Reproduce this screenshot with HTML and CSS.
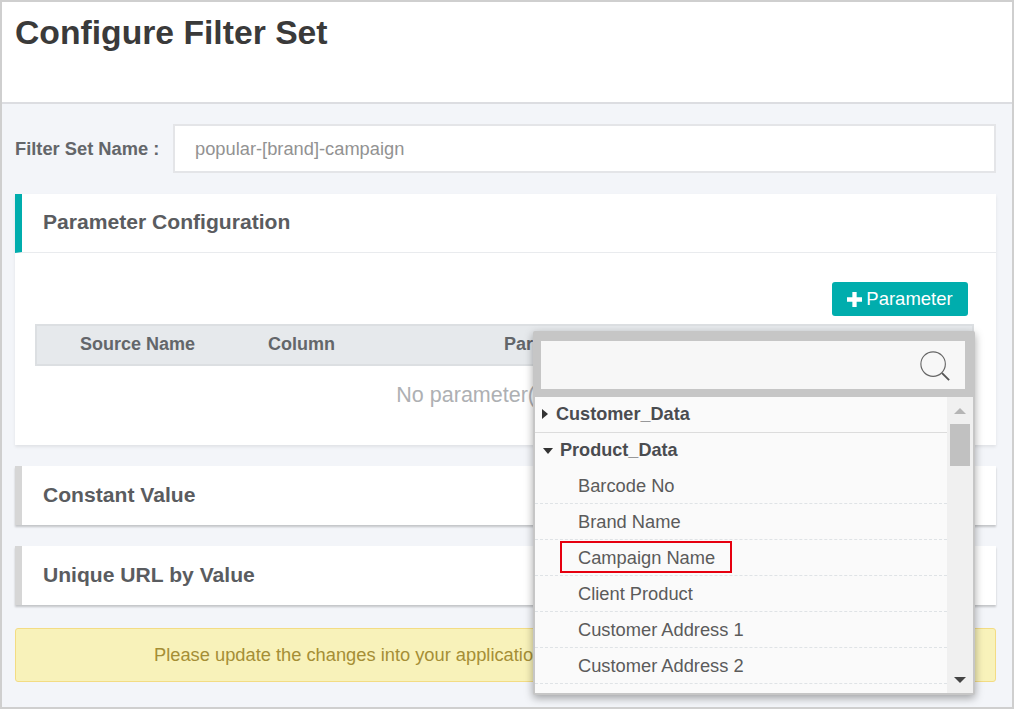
FILE: index.html
```html
<!DOCTYPE html>
<html lang="en">
<head>
<meta charset="utf-8">
<title>Configure Filter Set</title>
<link rel="stylesheet" href="styles.css">
</head>
<body>
<div class="frame">
  <header class="page-head"><h1>Configure Filter Set</h1></header>
  <main class="page-body">
    <div class="name-row">
      <label class="name-label">Filter Set Name :</label>
      <div class="name-input">popular-[brand]-campaign</div>
    </div>

    <section class="panel panel-active">
      <div class="panel-head active"><h2>Parameter Configuration</h2></div>
      <div class="panel-content">
        <div class="btn-row">
          <button class="add-btn"><svg class="plus" viewBox="0 0 14 14"><path d="M5 0h4v5h5v4H9v5H5V9H0V5h5z"/></svg>Parameter</button>
        </div>
        <div class="table-head">
          <span class="col col-source">Source Name</span>
          <span class="col col-column">Column</span>
          <span class="col col-param">Parameter</span>
        </div>
        <div class="empty">No parameter(s) found</div>
      </div>
    </section>

    <section class="panel"><div class="panel-head"><h2>Constant Value</h2></div></section>
    <section class="panel"><div class="panel-head"><h2>Unique URL by Value</h2></div></section>

    <div class="alert">Please update the changes into your application to apply the filter set</div>

    <div class="popup">
      <div class="search">
        <svg class="search-icon" viewBox="0 0 34 34"><circle cx="15" cy="15" r="13" fill="none" stroke="#666" stroke-width="1.2"/><path d="M24.5 24.5l7.5 7.5" stroke="#555" stroke-width="2" fill="none"/></svg>
      </div>
      <div class="list-wrap">
        <ul class="list">
          <li class="group group-closed"><span class="tri-right"></span>Customer_Data</li>
          <li class="group group-open"><span class="tri-down"></span>Product_Data</li>
          <li class="item">Barcode No</li>
          <li class="item">Brand Name</li>
          <li class="item item-marked"><span class="mark"></span>Campaign Name</li>
          <li class="item">Client Product</li>
          <li class="item">Customer Address 1</li>
          <li class="item">Customer Address 2</li>
          <li class="item">Customer Age</li>
        </ul>
        <div class="scrollbar">
          <span class="arrow-up"></span>
          <span class="thumb"></span>
          <span class="arrow-down"></span>
        </div>
      </div>
    </div>
  </main>
</div>
</body>
</html>
```

FILE: styles.css
```css
* { box-sizing: border-box; }
html, body { margin: 0; height: 100%; }
body { font-family: "Liberation Sans", Arial, sans-serif; background: #fff; overflow: hidden; }
.frame { width: 1014px; height: 709px; border: 2px solid #cfcfcf; display: flex; flex-direction: column; overflow: hidden; }
.page-head { height: 102px; background: #fff; border-bottom: 2px solid #dcdde1; padding: 11px 13px 0; flex: none; }
.page-head h1 { margin: 0; font-size: 33.7px; line-height: 38px; font-weight: 700; color: #3a3a3a; }
.page-body { flex: 1; background: #f3f5f9; padding: 20px 16px 0 13px; position: relative; }
.name-row { display: flex; align-items: center; height: 49px; }
.name-label { width: 158px; font-size: 18.3px; font-weight: 700; color: #63666a; white-space: nowrap; }
.name-input { flex: 1; height: 49px; border: 2px solid #e4e5e8; background: #fff; padding-left: 20px; font-size: 18.3px; line-height: 45px; color: #929292; }
.panel { background: #fff; margin-top: 21px; box-shadow: 0 2px 2px rgba(0,0,0,.2); }
.panel-active { box-shadow: 0 2px 3px rgba(0,0,0,.08); }
.panel-head { height: 59px; border-left: 7px solid #d6d6d6; padding: 0 0 2px 21px; display: flex; align-items: center; }
.panel-head.active { border-left-color: #00adad; border-bottom: 1px solid #e9ebee; }
.panel-head h2 { margin: 0; font-size: 21.1px; font-weight: 700; color: #5a5c60; }
.panel-content { height: 192px; padding: 29px 22px 0 20px; }
.btn-row { display: flex; justify-content: flex-end; padding-right: 6px; height: 34px; }
.add-btn { width: 136px; height: 34px; background: #00adad; color: #fff; border: 0; border-radius: 3px; font: 18.5px "Liberation Sans", Arial, sans-serif; padding: 0; display: flex; align-items: center; justify-content: center; gap: 4px; }
.plus { width: 15px; height: 15px; fill: #fff; }
.table-head { margin-top: 8px; height: 42px; background: #e6e9ec; border: 2px solid #dcdfe2; padding-bottom: 2px; display: flex; align-items: center; font-size: 18px; font-weight: 700; color: #63666a; }
.col { display: block; }
.col-source { margin-left: 43px; width: 188px; }
.col-column { width: 236px; }
.empty { text-align: center; font-size: 21.5px; color: #aeb0b3; margin-top: 16px; line-height: 26px; }
.alert { margin-top: 23px; height: 54px; background: #f8f2ba; border: 1px solid #f3dc84; border-radius: 3px; color: #a58e35; font-size: 18.3px; line-height: 52px; padding-left: 138px; white-space: nowrap; overflow: hidden; }
.popup { position: absolute; left: 531px; top: 227px; width: 442px; height: 364px; background: #fafafa; border: 2px solid #c6c6c6; box-shadow: 0 3px 8px rgba(0,0,0,.35); border-radius: 2px; display: flex; flex-direction: column; }
.search { height: 64px; flex: none; background: #f7f7f7; border: solid #c6c6c6; border-width: 8px 8px 8px 6px; display: flex; align-items: center; justify-content: flex-end; padding-right: 14px; }
.search-icon { width: 32px; height: 32px; margin-top: 1px; }
.list-wrap { flex: 1; display: flex; overflow: hidden; min-height: 0; }
.list { list-style: none; margin: 0; padding: 0; flex: 1; overflow: hidden; }
.group { height: 36px; display: flex; align-items: center; font-size: 18.1px; font-weight: 700; color: #4a4c50; }
.group-closed { border-bottom: 1px solid #dcdcdc; padding: 0 0 0 7px; }
.group-open { height: 35px; padding-left: 8px; }
.tri-right { width: 0; height: 0; border-left: 6px solid #333; border-top: 5px solid transparent; border-bottom: 5px solid transparent; margin-right: 8px; margin-top: -2px; }
.tri-down { width: 0; height: 0; border-top: 6px solid #333; border-left: 5.5px solid transparent; border-right: 5.5px solid transparent; margin-right: 7px; }
.item { height: 36px; padding-left: 43px; font-size: 18.3px; line-height: 35px; color: #5b5b5b; border-bottom: 1px dashed #dfe3e6; position: relative; white-space: nowrap; }
.mark { position: absolute; left: 25px; top: 1px; width: 172px; height: 32px; border: 2px solid #e6000f; }
.scrollbar { width: 26px; flex: none; background: #f0f0f0; position: relative; }
.thumb { position: absolute; left: 3px; top: 27px; width: 20px; height: 42px; background: #c1c1c1; }
.arrow-up { position: absolute; left: 7px; top: 11px; border-bottom: 6px solid #b5b5b5; border-left: 6px solid transparent; border-right: 6px solid transparent; }
.arrow-down { position: absolute; left: 7px; bottom: 10px; border-top: 6px solid #444; border-left: 6px solid transparent; border-right: 6px solid transparent; }
```
